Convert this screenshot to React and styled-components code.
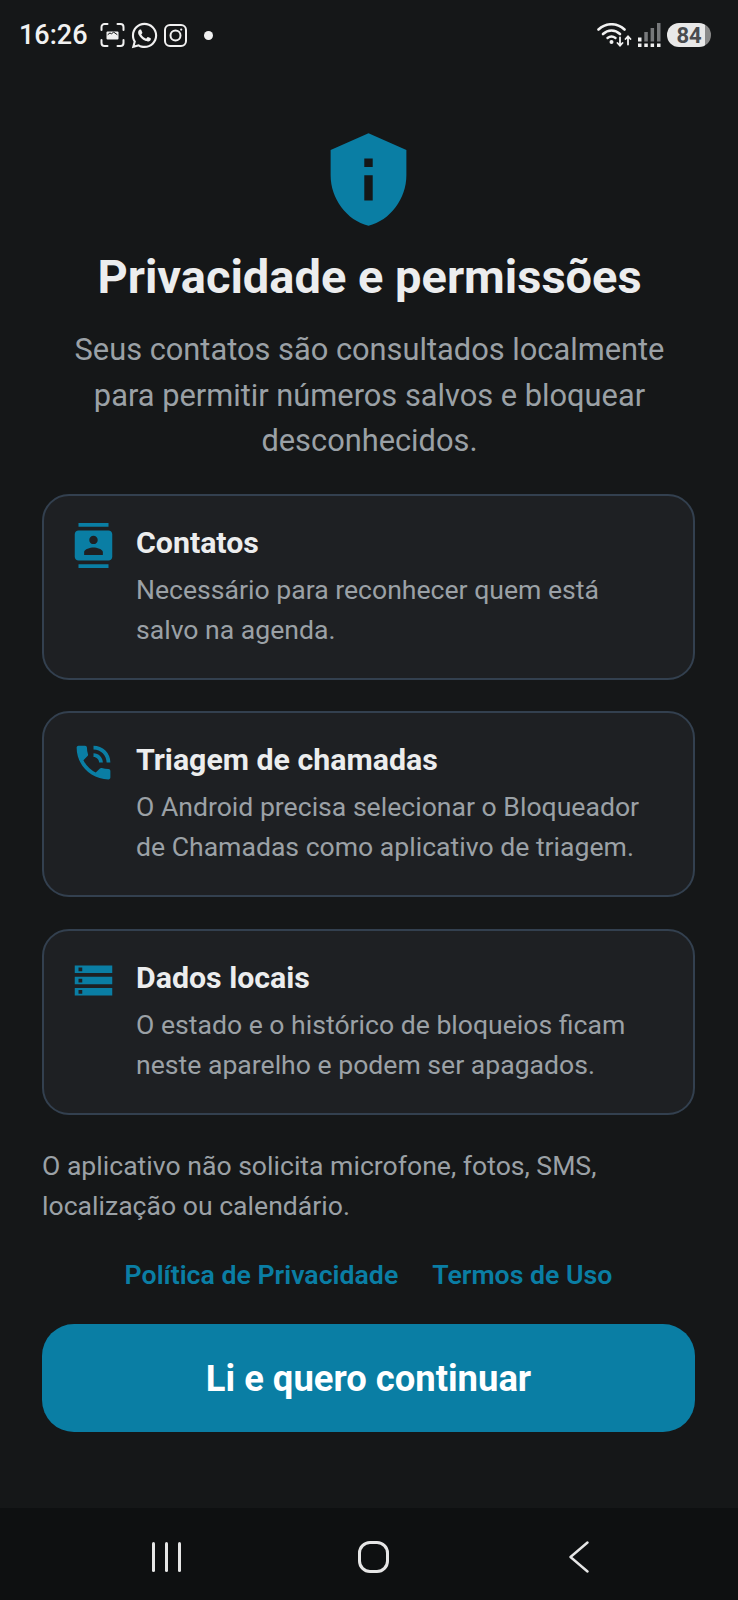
import React from 'react';
import styled, { createGlobalStyle } from 'styled-components';
import { FaWhatsapp } from 'react-icons/fa';
import { MdContacts, MdPhoneInTalk, MdStorage, MdPrivacyTip } from 'react-icons/md';

const cards = [
  {
    icon: MdContacts,
    title: 'Contatos',
    text: ['Necessário para reconhecer quem está', 'salvo na agenda.'],
  },
  {
    icon: MdPhoneInTalk,
    title: 'Triagem de chamadas',
    text: ['O Android precisa selecionar o Bloqueador', 'de Chamadas como aplicativo de triagem.'],
  },
  {
    icon: MdStorage,
    title: 'Dados locais',
    text: ['O estado e o histórico de bloqueios ficam', 'neste aparelho e podem ser apagados.'],
  },
];

const ScreenshotGlyph = () => (
  <svg width="25" height="24" viewBox="0 0 25 24" fill="none" stroke="#f1f1f1" strokeWidth="2" strokeLinecap="round">
    <path d="M1.5 7V4a3 3 0 0 1 3-3h3M17.5 1h3a3 3 0 0 1 3 3v3M23.5 17v3a3 3 0 0 1-3 3h-3M7.5 23h-3a3 3 0 0 1-3-3v-3" />
    <rect x="6.5" y="8.5" width="12" height="8" rx="1" fill="#f1f1f1" stroke="none" />
    <path d="M8 11.5l2-1.6 1.5 1.1 2-2 3.5 2.5" stroke="#151718" strokeWidth="1" />
  </svg>
);

const InstagramGlyph = () => (
  <svg width="23" height="23" viewBox="0 0 23 23" fill="none" stroke="#f1f1f1" strokeWidth="2">
    <rect x="1" y="1" width="21" height="21" rx="5" />
    <circle cx="11.5" cy="11.5" r="5" />
    <circle cx="17.2" cy="5.6" r="1.1" fill="#f1f1f1" stroke="none" />
  </svg>
);

const WifiGlyph = () => (
  <svg width="35" height="24" viewBox="0 0 35 24" fill="none" stroke="#f1f1f1" strokeLinecap="round">
    <path d="M1.5 6.5C9 -0.5 20 -0.5 27.5 6.5" strokeWidth="2.6" />
    <path d="M6 11c5-4.6 12-4.6 17 0" strokeWidth="2.6" />
    <path d="M10.5 15c2.5-2 5.5-2 8 0" strokeWidth="2.4" />
    <circle cx="14.5" cy="19" r="2" fill="#f1f1f1" stroke="none" />
    <path d="M23 14.5v8M20.5 20l2.5 2.7 2.5-2.7M31 21.5v-8M28.5 16l2.5-2.7 2.5 2.7" strokeWidth="1.8" />
  </svg>
);

const SignalGlyph = () => (
  <svg width="23" height="24" viewBox="0 0 23 24" fill="#f1f1f1">
    <rect x="0" y="20.5" width="3.5" height="3.5" />
    <rect x="6.3" y="20.5" width="3.5" height="3.5" />
    <rect x="12.6" y="20.5" width="3.5" height="3.5" />
    <rect x="19" y="20.5" width="3.5" height="3.5" />
    <rect x="0" y="14.5" width="3.5" height="4" />
    <rect x="6.3" y="9" width="3.5" height="9.5" fill="#77797b" />
    <rect x="12.6" y="5" width="3.5" height="13.5" fill="#77797b" />
    <rect x="19" y="0" width="3.5" height="18.5" fill="#77797b" />
  </svg>
);

const App = () => {
  return (
    <Screen>
      <GlobalStyle />
      <StatusBar>
        <StatusLeft>
          <Clock>16:26</Clock>
          <ScreenshotGlyph />
          <FaWhatsapp size={29} color="#f1f1f1" />
          <InstagramGlyph />
          <NotificationDot />
        </StatusLeft>
        <StatusRight>
          <WifiGlyph />
          <SignalGlyph />
          <Battery>84</Battery>
        </StatusRight>
      </StatusBar>

      <Main>
        <ShieldWrap>
          <MdPrivacyTip size={101} color="#0a7ea4" />
        </ShieldWrap>
        <Heading>Privacidade e permissões</Heading>
        <Subtitle>
          Seus contatos são consultados localmente
          <br />
          para permitir números salvos e bloquear
          <br />
          desconhecidos.
        </Subtitle>

        <CardList>
          {cards.map(({ icon: Icon, title, text }) => (
            <Card key={title}>
              <CardIcon>
                <Icon size={45} color="#0a7ea4" />
              </CardIcon>
              <div>
                <CardTitle>{title}</CardTitle>
                <CardText>
                  {text[0]}
                  <br />
                  {text[1]}
                </CardText>
              </div>
            </Card>
          ))}
        </CardList>

        <Note>
          O aplicativo não solicita microfone, fotos, SMS,
          <br />
          localização ou calendário.
        </Note>

        <Links>
          <LinkText>Política de Privacidade</LinkText>
          <LinkText>Termos de Uso</LinkText>
        </Links>

        <ContinueButton type="button">Li e quero continuar</ContinueButton>
      </Main>

      <NavBar>
        <RecentsIcon>
          <span />
          <span />
          <span />
        </RecentsIcon>
        <HomeIcon />
        <svg width="20" height="32" viewBox="0 0 20 32" fill="none" stroke="#e6e6e6" strokeWidth="2.4" strokeLinecap="round" strokeLinejoin="round">
          <path d="M18.5 1.5L1.5 16l17 14.5" />
        </svg>
      </NavBar>
    </Screen>
  );
};

export default App;

const GlobalStyle = createGlobalStyle`
  html, body {
    margin: 0;
    padding: 0;
    background: #151718;
  }
`;

const Screen = styled.div`
  display: flex;
  flex-direction: column;
  width: 738px;
  height: 1600px;
  background: #151718;
  font-family: Roboto, "Liberation Sans", sans-serif;
  overflow: hidden;
`;

const StatusBar = styled.div`
  display: flex;
  justify-content: space-between;
  align-items: center;
  height: 70px;
  padding: 0 27px 0 19px;
  flex-shrink: 0;
`;

const StatusLeft = styled.div`
  display: flex;
  align-items: center;
  gap: 5px;
`;

const Clock = styled.span`
  margin-right: 7px;
  color: #f1f1f1;
  font-size: 27px;
  font-weight: 500;
`;

const NotificationDot = styled.span`
  width: 9px;
  height: 9px;
  margin-left: 12px;
  border-radius: 50%;
  background: #f1f1f1;
`;

const StatusRight = styled.div`
  display: flex;
  align-items: center;
  gap: 6px;
`;

const Battery = styled.span`
  display: flex;
  justify-content: center;
  align-items: center;
  width: 44px;
  height: 24px;
  border-radius: 12px;
  background: linear-gradient(90deg, #e8e8e8 86%, #8a8a8a 86%);
  color: #4a4c4f;
  font-size: 22px;
  font-weight: 700;
`;

const Main = styled.main`
  flex: 1;
  display: flex;
  flex-direction: column;
  padding: 0 43px 0 42px;
`;

const ShieldWrap = styled.div`
  display: flex;
  justify-content: center;
  margin-top: 59px;
  height: 101px;
`;

const Heading = styled.h1`
  margin: 20px 0 0 2px;
  color: #ecedee;
  font-size: 47px;
  font-weight: 700;
  line-height: 54px;
  text-align: center;
  white-space: nowrap;
`;

const Subtitle = styled.p`
  margin: 23px 0 0 2px;
  color: #9ba1a6;
  font-size: 30.8px;
  line-height: 45.7px;
  text-align: center;
  white-space: nowrap;
`;

const CardList = styled.div`
  display: flex;
  flex-direction: column;
  gap: 31.3px;
  margin-top: 30px;
`;

const Card = styled.section`
  display: flex;
  gap: 20px;
  height: 186px;
  box-sizing: border-box;
  padding: 24px 27px 0;
  border: 2px solid #33404f;
  border-radius: 27px;
  background: #1e2023;
`;

const CardIcon = styled.div`
  flex-shrink: 0;
  width: 45px;
  height: 45px;
  margin-top: 3px;
`;

const CardTitle = styled.h2`
  margin: 0;
  color: #ecedee;
  font-size: 30.3px;
  font-weight: 700;
  line-height: 46px;
  white-space: nowrap;
`;

const CardText = styled.p`
  margin: 4px 0 0;
  color: #9ba1a6;
  font-size: 26.6px;
  line-height: 40px;
  white-space: nowrap;
`;

const Note = styled.p`
  margin: 31.5px 0 0;
  color: #9ba1a6;
  font-size: 26.6px;
  line-height: 40px;
  white-space: nowrap;
`;

const Links = styled.div`
  display: flex;
  justify-content: center;
  gap: 34px;
  margin-top: 29px;
`;

const LinkText = styled.a`
  color: #0a7ea4;
  font-size: 26.7px;
  font-weight: 600;
  line-height: 40px;
`;

const ContinueButton = styled.button`
  height: 108px;
  margin-top: 29px;
  border: 0;
  border-radius: 32px;
  background: #0a7ea4;
  color: #ffffff;
  font-family: inherit;
  font-size: 36.4px;
  font-weight: 700;
`;

const NavBar = styled.nav`
  display: flex;
  justify-content: space-between;
  align-items: center;
  height: 92px;
  box-sizing: border-box;
  padding: 6px 149px 0 152px;
  flex-shrink: 0;
  background: #0e1011;
`;

const RecentsIcon = styled.div`
  display: flex;
  gap: 10px;

  span {
    width: 3px;
    height: 30px;
    border-radius: 2px;
    background: #e6e6e6;
  }
`;

const HomeIcon = styled.div`
  width: 31px;
  height: 32px;
  margin-right: 3px;
  box-sizing: border-box;
  border: 3px solid #e6e6e6;
  border-radius: 12px;
`;
